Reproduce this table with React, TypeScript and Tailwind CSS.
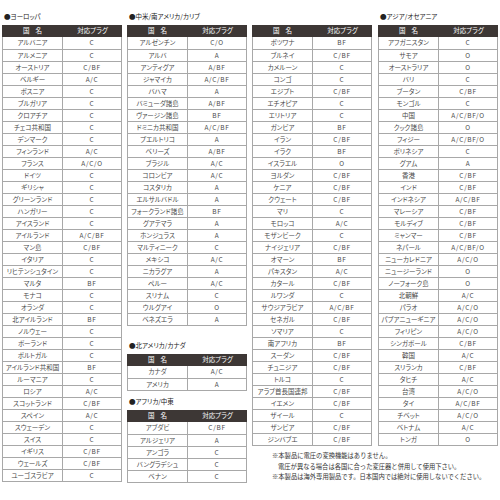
type Row = [string, string];

const europe: Row[] = [
  ['アルバニア', 'C'],
  ['アルメニア', 'C'],
  ['オーストリア', 'C/BF'],
  ['ベルギー', 'A/C'],
  ['ボスニア', 'C'],
  ['ブルガリア', 'C'],
  ['クロアチア', 'C'],
  ['チェコ共和国', 'C'],
  ['デンマーク', 'C'],
  ['フィンランド', 'A/C'],
  ['フランス', 'A/C/O'],
  ['ドイツ', 'C'],
  ['ギリシャ', 'C'],
  ['グリーンランド', 'C'],
  ['ハンガリー', 'C'],
  ['アイスランド', 'C'],
  ['アイルランド', 'A/C/BF'],
  ['マン島', 'C/BF'],
  ['イタリア', 'C'],
  ['リヒテンシュタイン', 'C'],
  ['マルタ', 'BF'],
  ['モナコ', 'C'],
  ['オランダ', 'C'],
  ['北アイルランド', 'BF'],
  ['ノルウェー', 'C'],
  ['ポーランド', 'C'],
  ['ポルトガル', 'C'],
  ['アイルランド共和国', 'BF'],
  ['ルーマニア', 'C'],
  ['ロシア', 'A/C'],
  ['スコットランド', 'C/BF'],
  ['スペイン', 'A/C'],
  ['スウェーデン', 'C'],
  ['スイス', 'C'],
  ['イギリス', 'C/BF'],
  ['ウェールズ', 'C/BF'],
  ['ユーゴスラビア', 'C'],
];

const latinAmerica: Row[] = [
  ['アルゼンチン', 'C/O'],
  ['アルバ', 'A'],
  ['アンティグア', 'A/BF'],
  ['ジャマイカ', 'A/C/BF'],
  ['バハマ', 'A'],
  ['バミューダ諸島', 'A/BF'],
  ['ヴァージン諸島', 'BF'],
  ['ドミニカ共和国', 'A/C/BF'],
  ['プエルトリコ', 'A'],
  ['ベリーズ', 'A/BF'],
  ['ブラジル', 'A/C'],
  ['コロンビア', 'A/C'],
  ['コスタリカ', 'A'],
  ['エルサルバドル', 'A'],
  ['フォークランド諸島', 'BF'],
  ['グアテマラ', 'A'],
  ['ホンジュラス', 'A'],
  ['マルティニーク', 'C'],
  ['メキシコ', 'A/C'],
  ['ニカラグア', 'A'],
  ['ペルー', 'A/C'],
  ['スリナム', 'C'],
  ['ウルグアイ', 'O'],
  ['ベネズエラ', 'A'],
];

const northAmerica: Row[] = [
  ['カナダ', 'A/C'],
  ['アメリカ', 'A'],
];

const africaTop: Row[] = [
  ['アブダビ', 'C/BF'],
  ['アルジェリア', 'A'],
  ['アンゴラ', 'C'],
  ['バングラデシュ', 'C'],
  ['ベナン', 'C'],
];

const africaRest: Row[] = [
  ['ボツワナ', 'BF'],
  ['ブルネイ', 'C/BF'],
  ['カメルーン', 'C'],
  ['コンゴ', 'C'],
  ['エジプト', 'C/BF'],
  ['エチオピア', 'C'],
  ['エリトリア', 'C'],
  ['ガンビア', 'BF'],
  ['イラン', 'C/BF'],
  ['イラク', 'BF'],
  ['イスラエル', 'O'],
  ['ヨルダン', 'C/BF'],
  ['ケニア', 'C/BF'],
  ['クウェート', 'C/BF'],
  ['マリ', 'C'],
  ['モロッコ', 'A/C'],
  ['モザンビーク', 'C'],
  ['ナイジェリア', 'C/BF'],
  ['オマーン', 'BF'],
  ['パキスタン', 'A/C'],
  ['カタール', 'C/BF'],
  ['ルワンダ', 'C'],
  ['サウジアラビア', 'A/C/BF'],
  ['セネガル', 'C/BF'],
  ['ソマリア', 'C'],
  ['南アフリカ', 'BF'],
  ['スーダン', 'C/BF'],
  ['チュニジア', 'C/BF'],
  ['トルコ', 'C'],
  ['アラブ首長国連邦', 'C/BF'],
  ['イエメン', 'C/BF'],
  ['ザイール', 'C'],
  ['ザンビア', 'C/BF'],
  ['ジンバブエ', 'C/BF'],
];

const asia: Row[] = [
  ['アフガニスタン', 'C'],
  ['サモア', 'O'],
  ['オーストラリア', 'O'],
  ['バリ', 'C'],
  ['ブータン', 'C/BF'],
  ['モンゴル', 'C'],
  ['中国', 'A/C/BF/O'],
  ['クック諸島', 'O'],
  ['フィジー', 'A/C/BF/O'],
  ['ポリネシア', 'C'],
  ['グアム', 'A'],
  ['香港', 'C/BF'],
  ['インド', 'C/BF'],
  ['インドネシア', 'A/C/BF'],
  ['マレーシア', 'C/BF'],
  ['モルディブ', 'C/BF'],
  ['ミャンマー', 'C/BF'],
  ['ネパール', 'A/C/BF/O'],
  ['ニューカレドニア', 'A/C/O'],
  ['ニュージーランド', 'O'],
  ['ノーフォーク島', 'O'],
  ['北朝鮮', 'A/C'],
  ['パラオ', 'A/C/O'],
  ['パプアニューギニア', 'A/C/O'],
  ['フィリピン', 'A/C/O'],
  ['シンガポール', 'C/BF'],
  ['韓国', 'A/C'],
  ['スリランカ', 'C/BF'],
  ['タヒチ', 'A/C'],
  ['台湾', 'A/C/O'],
  ['タイ', 'A/C/BF'],
  ['チベット', 'A/C/O'],
  ['ベトナム', 'A/C'],
  ['トンガ', 'O'],
];

function Title({ children }: { children?: string }) {
  return (
    <div className="mb-[4px] h-[10px] pl-[2px] text-[6.5px] leading-[10px] text-[#222] [font-feature-settings:'palt']">
      {children}
    </div>
  );
}

function PlugTable({ rows }: { rows: Row[] }) {
  return (
    <div className="w-[120px]">
      <div className="grid h-[12px] grid-cols-[61px_1fr] bg-[#3d3735] text-[6.5px] text-white">
        <div className="flex items-center justify-center gap-[6px]">
          <span>国</span>
          <span>名</span>
        </div>
        <div className="flex items-center justify-center [font-feature-settings:'palt']">対応プラグ</div>
      </div>
      <div className="border-x border-b border-[#a8a8a8]">
        {rows.map(([name, plug], i) => (
          <div
            key={name}
            className={`grid h-[12px] grid-cols-[60px_1fr] text-[6.5px] text-[#4a4a4a] ${i > 0 ? 'border-t border-[#a8a8a8]' : ''}`}
          >
            <div className="flex items-center justify-center border-r border-[#a8a8a8] whitespace-nowrap [font-feature-settings:'palt']">
              {name}
            </div>
            <div className="flex items-center justify-center tracking-[0.7px]">{plug}</div>
          </div>
        ))}
      </div>
    </div>
  );
}

export default function App() {
  return (
    <div className="flex h-[500px] w-[500px] gap-[5px] bg-white pl-[2px] pt-[11px] font-['Noto_Sans_CJK_JP','Noto_Sans',sans-serif]">
      {/* Europe */}
      <div className="flex w-[120px] flex-col">
        <Title>●ヨーロッパ</Title>
        <PlugTable rows={europe} />
      </div>

      {/* Latin America, North America, Africa */}
      <div className="flex w-[120px] flex-col">
        <Title>●中米/南アメリカ/カリブ</Title>
        <PlugTable rows={latinAmerica} />
        <div className="mt-[14px]">
          <Title>●北アメリカ/カナダ</Title>
        </div>
        <PlugTable rows={northAmerica} />
        <div className="mt-[5px]">
          <Title>●アフリカ/中東</Title>
        </div>
        <PlugTable rows={africaTop} />
      </div>

      {/* Africa continued + Asia, notes underneath */}
      <div className="flex flex-col">
        <div className="flex gap-[6px]">
          <div className="flex w-[120px] flex-col">
            <Title />
            <PlugTable rows={africaRest} />
          </div>
          <div className="flex w-[120px] flex-col">
            <Title>●アジア/オセアニア</Title>
            <PlugTable rows={asia} />
          </div>
        </div>
        <div className="mt-[5px] pl-[20px] text-[6.3px] leading-[10.5px] text-[#333]">
          <p>※本製品に電圧の変換機能はありません。</p>
          <p className="pl-[6px]">電圧が異なる場合は各国に合った変圧器と併用して使用下さい。</p>
          <p>※本製品は海外専用製品です。日本国内では絶対に使用しないでください。</p>
        </div>
      </div>
    </div>
  );
}
